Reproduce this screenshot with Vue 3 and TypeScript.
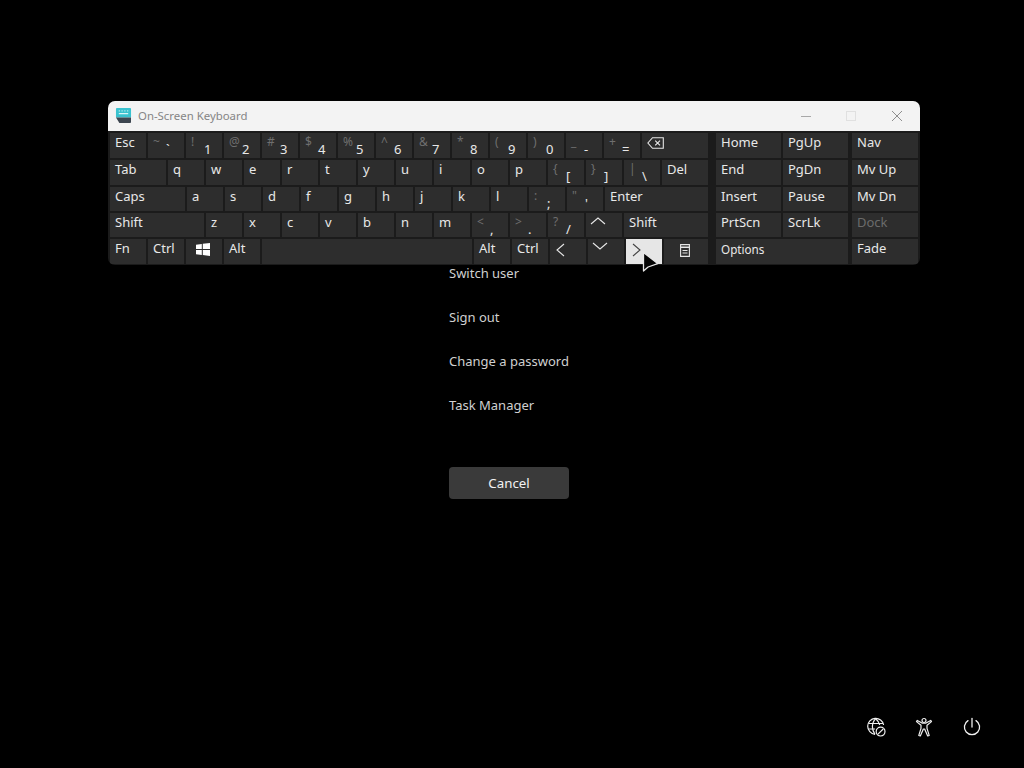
<script setup lang="ts">
interface Key {
  w: number
  label?: string
  shift?: string
  main?: string
  icon?: string
  dim?: boolean
  small?: boolean
  active?: boolean
}

const k = (label: string, w = 36): Key => ({ w, label })
const p = (shift: string, main: string, w = 36): Key => ({ w, shift, main })
const ic = (icon: string, w = 36, active = false): Key => ({ w, icon, active })

const mainRows: Key[][] = [
  [k('Esc'), p('~', '`'), p('!', '1'), p('@', '2'), p('#', '3'), p('$', '4'), p('%', '5'), p('^', '6'), p('&', '7'), p('*', '8'), p('(', '9'), p(')', '0'), p('_', '-'), p('+', '='), ic('back', 66)],
  [k('Tab', 56), k('q'), k('w'), k('e'), k('r'), k('t'), k('y'), k('u'), k('i'), k('o'), k('p'), p('{', '['), p('}', ']'), p('|', '\\'), k('Del', 46)],
  [k('Caps', 75), k('a'), k('s'), k('d'), k('f'), k('g'), k('h'), k('j'), k('k'), k('l'), p(':', ';'), p('"', "'"), k('Enter', 103)],
  [k('Shift', 94), k('z'), k('x'), k('c'), k('v'), k('b'), k('n'), k('m'), p('<', ','), p('>', '.'), p('?', '/'), ic('up'), k('Shift', 84)],
  [k('Fn'), k('Ctrl'), ic('win'), k('Alt'), { w: 210 }, k('Alt'), k('Ctrl'), ic('left'), ic('down'), ic('right', 36, true), ic('menu', 44)],
]

const sideRows: Key[][] = [
  [k('Home', 65), k('PgUp', 65), k('Nav', 66)],
  [k('End', 65), k('PgDn', 65), k('Mv Up', 66)],
  [k('Insert', 65), k('Pause', 65), k('Mv Dn', 66)],
  [k('PrtScn', 65), k('ScrLk', 65), { w: 66, label: 'Dock', dim: true }],
  [{ w: 132, label: 'Options', small: true }, k('Fade', 66)],
]

const actions = ['Switch user', 'Sign out', 'Change a password', 'Task Manager']
</script>

<template>
  <div class="page">
    <section class="osk">
      <header class="titlebar">
        <svg class="app-icon" width="17" height="16" viewBox="0 0 18 17">
          <path d="M2 0h14a1 1 0 0 1 1 1v9H1V1a1 1 0 0 1 1-1z" fill="#39c2cf" />
          <path d="M1 10h16v5a1 1 0 0 1-1 1H5a1 1 0 0 1-1-1z" fill="#3d4650" />
          <path d="M4 3h1M7 3h1M10 3h1M13 3h1M4 6h10" stroke="#d9f6f8" stroke-width="1.2" fill="none" />
        </svg>
        <span class="title">On-Screen Keyboard</span>
        <div class="controls">
          <svg width="12" height="12" viewBox="0 0 12 12"><path d="M1 6.5h10" stroke="#a8a8a8" /></svg>
          <svg width="12" height="12" viewBox="0 0 12 12"><rect x="1.5" y="1.5" width="9" height="9" fill="none" stroke="#e0e0e0" /></svg>
          <svg class="close" width="12" height="12" viewBox="0 0 12 12"><path d="M1 1l10 10M11 1L1 11" stroke="#8e8e8e" /></svg>
        </div>
      </header>

      <div class="board">
        <div class="block">
          <div v-for="(row, r) in mainRows" :key="r" class="row">
            <div
              v-for="(key, i) in row"
              :key="i"
              class="key"
              :class="{ active: key.active }"
              :style="{ width: key.w + 'px' }"
            >
              <span v-if="key.label" class="label">{{ key.label }}</span>
              <template v-if="key.main">
                <span class="shift">{{ key.shift }}</span>
                <span class="main">{{ key.main }}</span>
              </template>
              <svg v-if="key.icon === 'back'" class="ico back" width="17" height="12" viewBox="0 0 17 12">
                <path d="M5.5.7h10.8v10.6H5.5L.9 6z" fill="none" stroke="#e6e6e6" stroke-width="1.1" />
                <path d="M8.2 3.6l4.8 4.8M13 3.6l-4.8 4.8" stroke="#e6e6e6" stroke-width="1.2" />
              </svg>
              <svg v-if="key.icon === 'win'" class="ico win" width="14" height="13" viewBox="0 0 14 13">
                <path d="M0 1.8L5.8 1v5H0zM6.8.8L14 0v6H6.8zM0 7h5.8v5L0 11.2zM6.8 7H14v6l-7.2-1z" fill="#fff" />
              </svg>
              <svg v-if="key.icon === 'up'" class="ico up" width="16" height="8" viewBox="0 0 16 8">
                <path d="M1 7l7-6 7 6" fill="none" stroke="#e6e6e6" stroke-width="1.1" />
              </svg>
              <svg v-if="key.icon === 'down'" class="ico down" width="16" height="8" viewBox="0 0 16 8">
                <path d="M1 1l7 6 7-6" fill="none" stroke="#e6e6e6" stroke-width="1.1" />
              </svg>
              <svg v-if="key.icon === 'left'" class="ico left" width="10" height="14" viewBox="0 0 10 14">
                <path d="M9 1L2 7l7 6" fill="none" stroke="#e6e6e6" stroke-width="1.1" />
              </svg>
              <svg v-if="key.icon === 'right'" class="ico right" width="10" height="14" viewBox="0 0 10 14">
                <path d="M1 1l7 6-7 6" fill="none" stroke="#444" stroke-width="1.1" />
              </svg>
              <svg v-if="key.icon === 'menu'" class="ico menu" width="10" height="13" viewBox="0 0 10 13">
                <path d="M.6.6h8.8v11.8H.6z" fill="none" stroke="#e6e6e6" stroke-width="1.1" />
                <path d="M.6 3.2h8.8" stroke="#e6e6e6" stroke-width="1.4" />
                <path d="M2.5 6.5h5M2.5 9h5" stroke="#e6e6e6" />
              </svg>
            </div>
          </div>
        </div>

        <div class="block side">
          <div v-for="(row, r) in sideRows" :key="r" class="row">
            <div
              v-for="(key, i) in row"
              :key="i"
              class="key"
              :class="{ dim: key.dim, small: key.small }"
              :style="{ width: key.w + 'px' }"
            >
              <span class="label">{{ key.label }}</span>
            </div>
          </div>
        </div>
      </div>
    </section>

    <svg class="cursor" width="18" height="23" viewBox="0 0 18 23">
      <path d="M1.5 1.5v18.5l4.6-4 9.6-3.4z" fill="#050505" stroke="#e8e8e8" stroke-width="1.3" stroke-linejoin="round" />
    </svg>

    <nav class="actions">
      <a v-for="a in actions" :key="a" class="action">{{ a }}</a>
      <button class="cancel">Cancel</button>
    </nav>

    <footer class="tray">
      <svg width="20" height="20" viewBox="0 0 20 20" fill="none" stroke="#f0f0f0" stroke-width="1.2">
        <path d="M9 17.3A8 8 0 1 1 17.6 8" />
        <path d="M9.7 1.7C7.4 4 6.4 6.8 6.4 9.7c0 2.9 1 5.3 2.6 7.6M9.7 1.7c2.4 2 3.7 4.3 4 6.3M2.6 6.5h14.4M2.1 12h7" />
        <circle cx="14.6" cy="14.6" r="4.4" />
        <path d="M12 17.2l5.2-5.2" />
      </svg>
      <svg width="20" height="20" viewBox="0 0 20 20" fill="none" stroke="#f0f0f0" stroke-width="1.2" stroke-linejoin="round">
        <circle cx="10" cy="3.5" r="2" />
        <path d="M2.5 4.6l.8-1.2L8 6.1h4l4.7-2.7.8 1.2-4.5 3.6v3.2l2.2 7-1.5.6L10.6 12H9.4L6.3 19l-1.5-.6 2.2-7V8.2z" />
      </svg>
      <svg width="20" height="20" viewBox="0 0 20 20" fill="none" stroke="#f0f0f0" stroke-width="1.3" stroke-linecap="round">
        <path d="M10 1.5v8.5" />
        <path d="M6 3.6a7.6 7.6 0 1 0 8 0" />
      </svg>
    </footer>
  </div>
</template>

<style scoped>
.page {
  position: relative;
  width: 1024px;
  height: 768px;
  background: #000;
  overflow: hidden;
  font-family: "Noto Sans", "Open Sans", sans-serif;
  box-sizing: border-box;
  display: flex;
  flex-direction: column;
}

.osk {
  position: absolute;
  left: 108px;
  top: 101px;
  width: 812px;
  height: 164px;
  background: #1b1b1b;
  border-radius: 7px;
  overflow: hidden;
}

.titlebar {
  height: 30px;
  background: #f3f3f3;
  display: flex;
  align-items: center;
  padding-left: 7px;
}

.app-icon {
  margin-right: 6px;
}

.title {
  font-size: 11.4px;
  color: #858585;
  margin-bottom: 2px;
}

.controls {
  margin-left: auto;
  display: flex;
  gap: 33px;
  padding-right: 17px;
}

.close {
  margin-left: 1px;
}

.board {
  display: flex;
  gap: 8px;
  padding: 2px 2px 0;
}

.block {
  display: grid;
  grid-template-rows: 25px 25px 24px 24px 25px;
  gap: 2px;
}

.row {
  display: flex;
  gap: 2px;
}

.side .key:last-child {
  margin-left: 2px;
}

.key {
  position: relative;
  background: #2d2d2d;
  color: #e8e8e8;
  font-size: 13px;
  line-height: 18px;
  padding-left: 5px;
  box-sizing: border-box;
}

.key.active {
  background: #e6e6e6;
}

.key.dim {
  color: #6b6b6b;
}

.key.small {
  font-size: 11.7px;
  line-height: 21px;
}

.shift {
  position: absolute;
  left: 5px;
  top: 0;
  font-size: 12px;
  color: #6f6f6f;
}

.main {
  position: absolute;
  left: 18px;
  top: 7px;
  font-size: 13px;
  color: #e8e8e8;
}

.ico {
  position: absolute;
}

.back {
  left: 5px;
  top: 4px;
}

.win {
  left: 10px;
  top: 4px;
}

.up {
  left: 4px;
  top: 4px;
}

.down {
  left: 4px;
  top: 3px;
}

.left {
  left: 5px;
  top: 4px;
}

.right {
  left: 6px;
  top: 4px;
}

.menu {
  left: 16px;
  top: 5px;
}

.cursor {
  position: absolute;
  left: 642px;
  top: 251px;
}

.actions {
  display: flex;
  flex-direction: column;
  align-items: flex-start;
  margin: 263px 0 0 449px;
}

.action {
  font-size: 13px;
  line-height: 20px;
  height: 44px;
  color: #d0d0d0;
}

.cancel {
  margin-top: 28px;
  width: 120px;
  height: 32px;
  background: #3a3a3a;
  color: #f2f2f2;
  border: 0;
  border-radius: 4px;
  font: inherit;
  font-size: 13.3px;
}

.tray {
  margin-top: auto;
  display: flex;
  justify-content: flex-end;
  gap: 28px;
  padding: 0 42px 31px 0;
}
</style>

<style>
html, body {
  margin: 0;
  background: #000;
}
</style>
